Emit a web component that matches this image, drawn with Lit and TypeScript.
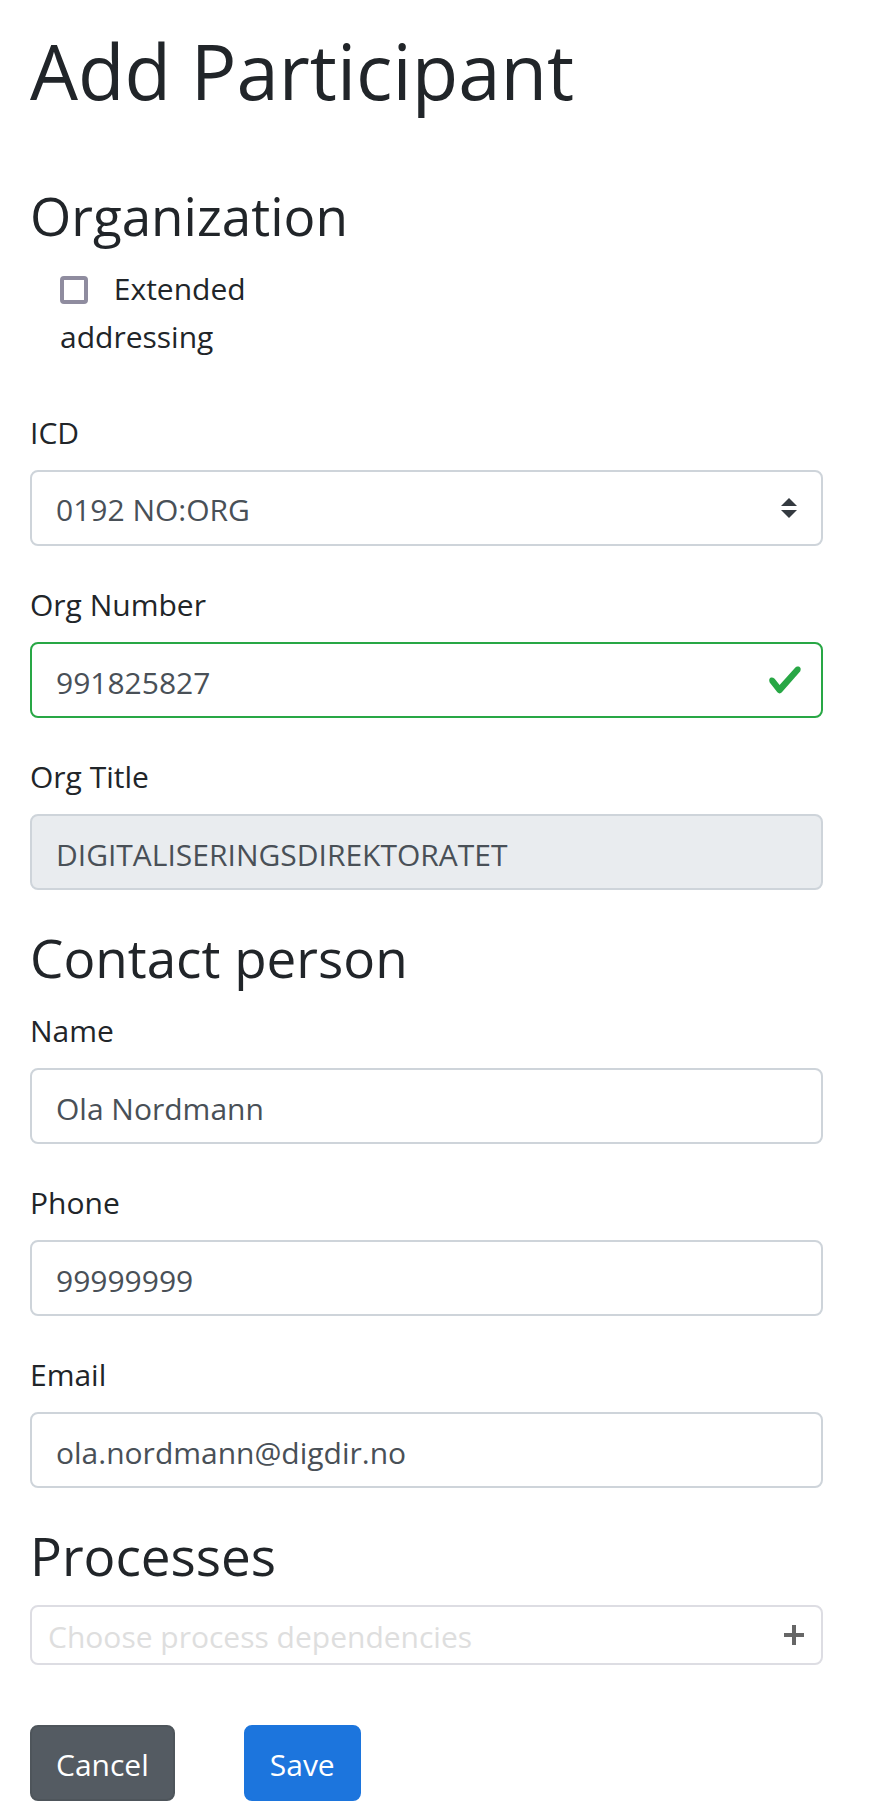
import { LitElement, html, css } from "lit";
import { customElement } from "lit/decorators.js";

@customElement("app-root")
export class AppRoot extends LitElement {
  static styles = css`
    :host {
      display: block;
      background: #fff;
      color: #212529;
      font-family: "Open Sans", "Noto Sans", sans-serif;
      font-size: 30px;
      line-height: 48px;
    }
    *,
    *::before,
    *::after {
      box-sizing: border-box;
    }
    .page {
      padding: 23px 49px 17px 30px;
    }
    .title,
    .heading {
      margin: 0;
      font-weight: 400;
    }
    .title {
      margin-bottom: 65px;
      font-size: 76px;
      line-height: 96px;
    }
    .heading {
      margin-bottom: 17px;
      font-size: 53px;
      line-height: 64px;
    }
    .section {
      margin-bottom: 36px;
    }
    .fields {
      display: flex;
      flex-direction: column;
      gap: 35px;
    }
    .extended {
      display: block;
      width: 28%;
      margin-bottom: 48px;
      padding-left: 30px;
    }
    .tick {
      appearance: none;
      width: 28px;
      height: 28px;
      margin: 0 18px 0 0;
      border: 4px solid #8f8c9f;
      border-radius: 4px;
      background: #fff;
      vertical-align: -4px;
    }
    .tick:checked {
      background: #8f8c9f;
    }
    .field {
      display: flex;
      flex-direction: column;
      gap: 13px;
    }
    .box {
      position: relative;
      display: grid;
      align-items: center;
    }
    .control {
      appearance: none;
      display: block;
      width: 100%;
      min-width: 0;
      height: 76px;
      margin: 0;
      padding: 4px 24px 0;
      border: 2px solid #ced4da;
      border-radius: 8px;
      background: #fff;
      color: #495057;
      font: inherit;
      outline-color: #80bdff;
    }
    .valid {
      border-color: #28a745;
    }
    .control:read-only:not(select) {
      background: #e9ecef;
    }
    .compact {
      height: 60px;
      padding: 2px 60px 0 16px;
      border-color: #dddde3;
    }
    .compact::placeholder {
      color: #dedede;
      opacity: 1;
    }
    .mark {
      position: absolute;
      display: block;
      pointer-events: none;
    }
    .arrows {
      right: 26px;
    }
    .check {
      right: 20px;
    }
    .add {
      position: absolute;
      right: 9px;
      display: grid;
      place-items: center;
      width: 40px;
      height: 40px;
      padding: 0;
      border: 0;
      background: none;
    }
    .actions {
      display: flex;
      gap: 69px;
      margin-top: 60px;
    }
    .button {
      height: 76px;
      padding: 4px 24px 0;
      border: 2px solid;
      border-radius: 8px;
      color: #fff;
      font: inherit;
    }
    .cancel {
      border-color: #4e555b;
      background: #545b62;
    }
    .save {
      border-color: #1c75dd;
      background: #1c75dd;
    }
  `;

  private textField(id: string, label: string, value: string, type = "text", readonly = false) {
    return html`
      <div class="field">
        <label for=${id}>${label}</label>
        <div class="box">
          <input class="control" id=${id} type=${type} .value=${value} ?readonly=${readonly} />
        </div>
      </div>
    `;
  }

  render() {
    return html`
      <form class="page" @submit=${(e: Event) => e.preventDefault()}>
        <h1 class="title">Add Participant</h1>

        <section class="section">
          <h2 class="heading">Organization</h2>
          <label class="extended"><input class="tick" type="checkbox" /> Extended addressing</label>
          <div class="fields">
            <div class="field">
              <label for="icd">ICD</label>
              <div class="box">
                <select class="control" id="icd">
                  <option>0192 NO:ORG</option>
                </select>
                <svg class="mark arrows" width="16" height="20" viewBox="0 0 4 5" aria-hidden="true">
                  <path fill="#343a40" d="M2 0L0 2h4zm0 5L0 3h4z" />
                </svg>
              </div>
            </div>
            <div class="field">
              <label for="number">Org Number</label>
              <div class="box">
                <input class="control valid" id="number" type="text" inputmode="numeric" .value=${"991825827"} />
                <svg class="mark check" width="36" height="36" viewBox="0 0 8 8" aria-hidden="true">
                  <path
                    fill="#28a745"
                    d="M2.3 6.73L.6 4.53c-.4-1.04.46-1.4 1.1-.8l1.1 1.4 3.4-3.8c.6-.63 1.6-.27 1.2.7l-4 4.6c-.43.5-.8.4-1.1.1z"
                  />
                </svg>
              </div>
            </div>
            ${this.textField("title", "Org Title", "DIGITALISERINGSDIREKTORATET", "text", true)}
          </div>
        </section>

        <section class="section">
          <h2 class="heading">Contact person</h2>
          <div class="fields">
            ${this.textField("name", "Name", "Ola Nordmann")}
            ${this.textField("phone", "Phone", "99999999", "tel")}
            ${this.textField("email", "Email", "ola.nordmann@digdir.no", "email")}
          </div>
        </section>

        <section>
          <h2 class="heading" id="processes">Processes</h2>
          <div class="box">
            <input
              class="control compact"
              type="text"
              aria-labelledby="processes"
              placeholder="Choose process dependencies"
            />
            <button class="add" type="button" aria-label="Add process">
              <svg width="20" height="20" viewBox="0 0 20 20" aria-hidden="true">
                <path fill="#666" d="M8 0h4v8h8v4h-8v8H8v-8H0V8h8z" />
              </svg>
            </button>
          </div>
        </section>

        <div class="actions">
          <button class="button cancel" type="button">Cancel</button>
          <button class="button save" type="submit">Save</button>
        </div>
      </form>
    `;
  }
}
